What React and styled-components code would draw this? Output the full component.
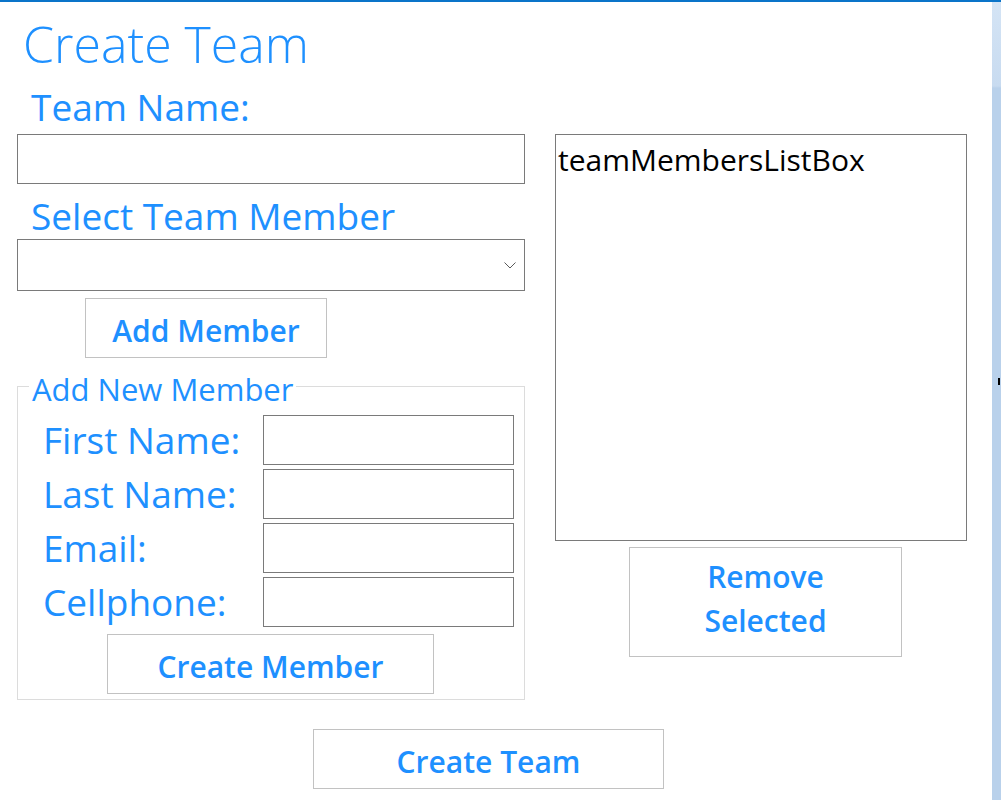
import { Fragment } from 'react';
import styled, { createGlobalStyle } from 'styled-components';

const GlobalStyle = createGlobalStyle`
  html, body {
    margin: 0;
    padding: 0;
    background: #fff;
  }
  body {
    font-family: 'Open Sans', 'Noto Sans', sans-serif;
  }
`;

const blue = '#1e90ff';

const Window = styled.div`
  width: 1001px;
  height: 800px;
  box-sizing: border-box;
  border-top: 2px solid #0a74c9;
  display: flex;
  overflow: hidden;
`;

const Form = styled.div`
  width: 992px;
  padding-left: 17px;
  box-sizing: border-box;
  display: flex;
  flex-direction: column;
  background: #fff;
`;

const SideStrip = styled.div`
  width: 9px;
  display: flex;
  flex-direction: column;
  background: linear-gradient(
    to bottom,
    #d4e4f5 0px,
    #c8dbf0 84px,
    #b9d1eb 86px,
    #b9d1eb 100%
  );
`;

const Grip = styled.div`
  width: 2px;
  height: 7px;
  margin: 376px 0 0 6px;
  background: #000;
`;

const Title = styled.h1`
  margin: 0;
  height: 84px;
  line-height: 84px;
  padding-left: 6px;
  font-size: 50px;
  font-weight: 300;
  color: ${blue};
`;

const Columns = styled.div`
  display: flex;
  gap: 30px;
  align-items: flex-start;
`;

const LeftCol = styled.div`
  width: 508px;
  display: flex;
  flex-direction: column;
`;

const RightCol = styled.div`
  width: 412px;
  padding-top: 48px;
  display: flex;
  flex-direction: column;
`;

const FieldLabel = styled.div`
  padding: ${p => p.$top}px 0 ${p => p.$bottom}px 14px;
  line-height: ${p => p.$lh}px;
  font-size: 37px;
  color: ${blue};
  white-space: nowrap;
`;

const TextBox = styled.input`
  display: block;
  box-sizing: border-box;
  width: 100%;
  height: 50px;
  margin: 0;
  border: 1px solid #7a7a7a;
  border-radius: 0;
  background: #fff;
  outline: none;
`;

const ComboBox = styled.div`
  box-sizing: border-box;
  height: 52px;
  border: 1px solid #7a7a7a;
  display: flex;
  align-items: center;
  justify-content: flex-end;
  padding-right: 8px;
  background: #fff;
`;

const Button = styled.button`
  box-sizing: border-box;
  align-self: flex-start;
  width: ${p => p.$w}px;
  height: ${p => p.$h}px;
  margin: ${p => p.$mt || 0}px 0 0 ${p => p.$ml || 0}px;
  padding: ${p => p.$pt ?? 5}px 0 ${p => p.$pb || 0}px;
  border: 1px solid #c2c2c2;
  border-radius: 0;
  background: #fff;
  color: ${blue};
  font-family: inherit;
  font-size: 30px;
  font-weight: 600;
  line-height: ${p => p.$lh || 40}px;
`;

const GroupBox = styled.fieldset`
  box-sizing: border-box;
  width: 508px;
  min-width: 0;
  margin: 10px 0 0;
  padding: 11px 0 5px;
  border: 1px solid #dcdcdc;
  display: flex;
  flex-direction: column;
`;

const Legend = styled.legend`
  margin-left: 11px;
  padding: 6px 3px 0;
  line-height: 30px;
  font-size: 31px;
  color: ${blue};
`;

const MemberGrid = styled.div`
  display: grid;
  grid-template-columns: 245px 251px;
  grid-auto-rows: 50px;
  row-gap: 4px;
`;

const GridLabel = styled.div`
  padding-left: 25px;
  line-height: 50px;
  font-size: 37px;
  color: ${blue};
  white-space: nowrap;
`;

const ListBox = styled.div`
  box-sizing: border-box;
  height: 407px;
  border: 1px solid #7a7a7a;
  padding: 7px 2px;
  font-size: 30px;
  line-height: 36px;
  color: #000;
`;

const Footer = styled.div`
  display: flex;
  padding-left: 296px;
  margin-top: 29px;
`;

const Chevron = () => (
  <svg width="12" height="7" viewBox="0 0 12 7">
    <polyline points="0.5,0.5 6,6 11.5,0.5" fill="none" stroke="#5a5a5a" strokeWidth="1" />
  </svg>
);

const memberFields = ['First Name:', 'Last Name:', 'Email:', 'Cellphone:'];

export default function App() {
  return (
    <>
      <GlobalStyle />
      <Window>
        <Form>
          <Title>Create Team</Title>
          <Columns>
            <LeftCol>
              <FieldLabel $top={0} $bottom={7} $lh={41}>Team Name:</FieldLabel>
              <TextBox readOnly />
              <FieldLabel $top={9} $bottom={0} $lh={46}>Select Team Member</FieldLabel>
              <ComboBox>
                <Chevron />
              </ComboBox>
              <Button $w={242} $h={60} $mt={7} $ml={68}>Add Member</Button>
              <GroupBox>
                <Legend>Add New Member</Legend>
                <MemberGrid>
                  {memberFields.map(label => (
                    <Fragment key={label}>
                      <GridLabel>{label}</GridLabel>
                      <TextBox readOnly />
                    </Fragment>
                  ))}
                </MemberGrid>
                <Button $w={327} $h={60} $mt={7} $ml={89}>Create Member</Button>
              </GroupBox>
            </LeftCol>
            <RightCol>
              <ListBox>teamMembersListBox</ListBox>
              <Button $w={273} $h={110} $mt={6} $ml={74} $lh={44} $pt={0} $pb={6}>
                Remove
                <br />
                Selected
              </Button>
            </RightCol>
          </Columns>
          <Footer>
            <Button $w={351} $h={60}>Create Team</Button>
          </Footer>
        </Form>
        <SideStrip>
          <Grip />
        </SideStrip>
      </Window>
    </>
  );
}
